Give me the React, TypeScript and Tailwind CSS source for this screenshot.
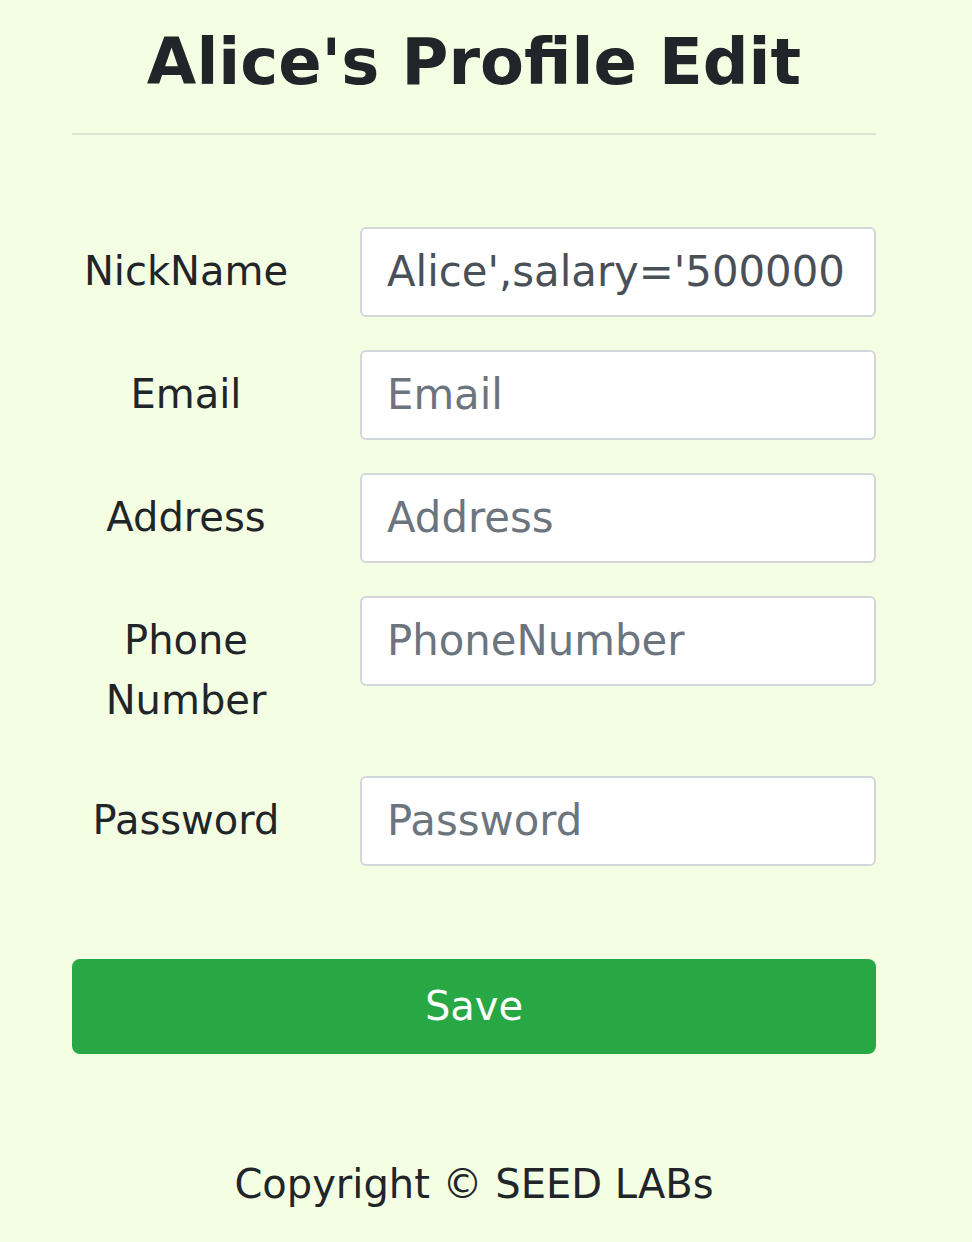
import React from "react";

const fields = [
  { label: "NickName", placeholder: "NickName", value: "Alice',salary='500000" },
  { label: "Email", placeholder: "Email", value: "" },
  { label: "Address", placeholder: "Address", value: "" },
  { label: "Phone Number", placeholder: "PhoneNumber", value: "" },
  { label: "Password", placeholder: "Password", value: "" },
];

export default function App() {
  return (
    <div className="min-h-[1242px] bg-[#f3fee3] font-['DejaVu_Sans',sans-serif] text-[#212529]">
      <div className="ml-[72px] w-[804px] pt-[24px]">
        <h2 className="text-center text-[64px] font-bold leading-[1.2]">
          Alice's Profile Edit
        </h2>
        <hr className="mt-[32px] border-t-2 border-[#dce3d2]" />

        <form className="mt-[92px] flex flex-col gap-[33px]">
          {fields.map((f) => (
            <div key={f.label} className="flex items-start">
              <label className="w-[228px] shrink-0 pt-[14.5px] pb-[12.5px] text-center text-[40px] leading-[60px]">
                {f.label === "Phone Number" ? (
                  <>
                    Phone
                    <br />
                    Number
                  </>
                ) : (
                  f.label
                )}
              </label>
              <input
                type="text"
                defaultValue={f.value}
                placeholder={f.placeholder}
                className="ml-[60px] h-[90px] w-[516px] rounded-[6px] border-2 border-[#d3d7dc] bg-white px-[25px] text-[41.8px] leading-[60px] text-[#495057] outline-none placeholder:text-[#6c757d]"
              />
            </div>
          ))}

          <button
            type="button"
            className="mt-[60px] h-[95px] w-full rounded-[8px] bg-[#28a745] text-[40px] leading-[60px] text-white"
          >
            Save
          </button>
        </form>

        <p className="mt-[100px] text-center text-[40px] leading-[60px]">
          Copyright © SEED LABs
        </p>
      </div>
    </div>
  );
}
